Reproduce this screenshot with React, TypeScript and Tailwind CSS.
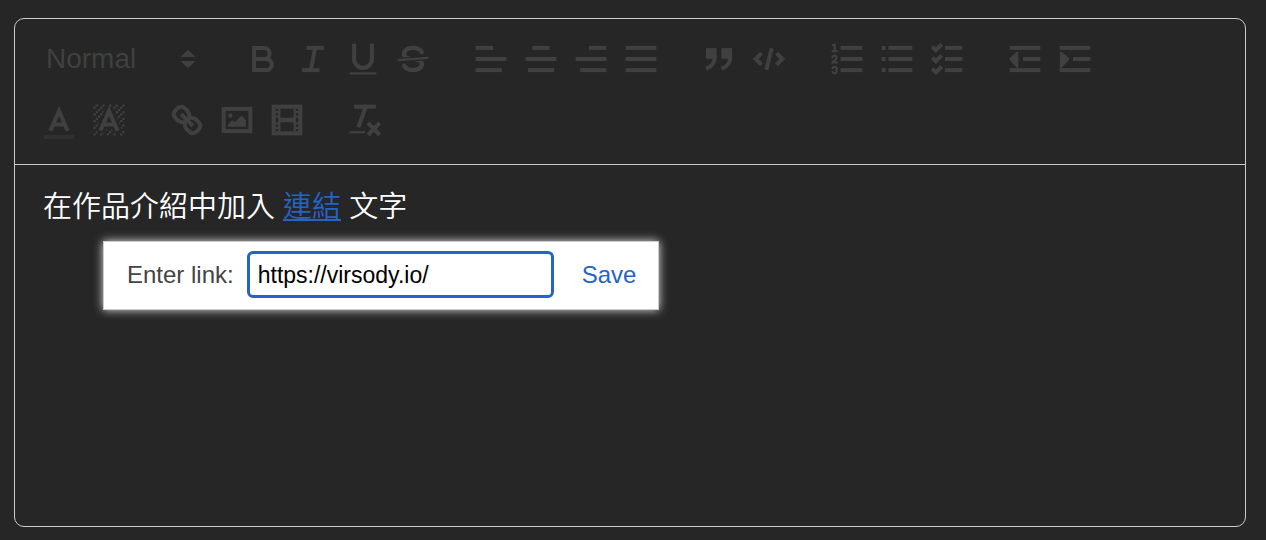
import React, { useState } from "react";

const s = {
  fill: "none",
  stroke: "currentColor",
  strokeWidth: 1.8,
  strokeLinecap: "square",
  strokeLinejoin: "miter",
} as const;
const thin = { ...s, strokeWidth: 1, strokeLinecap: "round" } as const;
const both = { ...s, fill: "currentColor" } as const;
const f = { fill: "currentColor" } as const;

function Icon({ children }: { children: React.ReactNode }) {
  return (
    <svg viewBox="0 0 18 18" className="size-10 shrink-0" aria-hidden="true">
      {children}
    </svg>
  );
}

/** Horizontal strokes given as [x1, x2, y]. */
function Lines({ rows }: { rows: number[][] }) {
  return (
    <>
      {rows.map(([a, b, y]) => (
        <line key={`${a}-${y}`} {...s} x1={a} x2={b} y1={y} y2={y} />
      ))}
    </>
  );
}

const hatch = [
  [4, 4], [2, 6], [3, 5], [4, 7], [2, 12], [2, 9], [2, 15], [3, 8], [12, 2], [11, 3],
  [2, 3], [6, 2], [3, 2], [5, 3], [9, 2], [15, 14], [13, 7], [15, 5], [14, 6], [15, 8],
  [14, 9], [14, 3], [15, 2], [12, 5], [13, 4], [9, 14], [8, 15], [5, 15], [11, 15],
  [14, 15], [15, 11],
];

type Tool = { label: string; icon: React.ReactNode };

const groups: Tool[][] = [
  [
    {
      label: "Bold",
      icon: (
        <>
          <path {...s} d="M5,4H9.5A2.5,2.5,0,0,1,12,6.5v0A2.5,2.5,0,0,1,9.5,9H5V4Z" />
          <path {...s} d="M5,9h5.5A2.5,2.5,0,0,1,13,11.5v0A2.5,2.5,0,0,1,10.5,14H5V9Z" />
        </>
      ),
    },
    {
      label: "Italic",
      icon: (
        <>
          <Lines rows={[[7, 13, 4], [5, 11, 14]]} />
          <line {...s} strokeLinecap="butt" x1="8" x2="10" y1="14" y2="4" />
        </>
      ),
    },
    {
      label: "Underline",
      icon: (
        <>
          <path {...s} d="M5,3V9a4.012,4.012,0,0,0,4,4H9a4.012,4.012,0,0,0,4-4V3" />
          <rect {...f} height="1" width="12" x="3" y="15" />
        </>
      ),
    },
    {
      label: "Strike",
      icon: (
        <>
          <line {...thin} x1="15.5" x2="2.5" y1="8.5" y2="9.5" />
          <path {...f} d="M9.007,8C6.542,7.791,6,7.519,6,6.5,6,5.792,7.283,5,9,5c1.571,0,2.765.679,2.969,1.309a1,1,0,0,0,1.9-.617C13.356,4.106,11.354,3,9,3,6.2,3,4,4.538,4,6.5a3.2,3.2,0,0,0,.5,1.843Z" />
          <path {...f} d="M8.984,10C11.457,10.208,12,10.479,12,11.5c0,.708-1.283,1.5-3,1.5-1.571,0-2.765-.679-2.969-1.309a1,1,0,1,0-1.9.617C4.644,13.894,6.646,15,9,15c2.8,0,5-1.538,5-3.5a3.2,3.2,0,0,0-.5-1.843Z" />
        </>
      ),
    },
  ],
  [
    { label: "Align left", icon: <Lines rows={[[3, 9, 4], [3, 15, 9], [3, 13, 14]]} /> },
    { label: "Align center", icon: <Lines rows={[[6, 12, 4], [3, 15, 9], [4, 14, 14]]} /> },
    { label: "Align right", icon: <Lines rows={[[9, 15, 4], [3, 15, 9], [5, 15, 14]]} /> },
    { label: "Justify", icon: <Lines rows={[[3, 15, 4], [3, 15, 9], [3, 15, 14]]} /> },
  ],
  [
    {
      label: "Quote",
      icon: (
        <>
          <rect {...both} height="3" width="3" x="4" y="5" />
          <rect {...both} height="3" width="3" x="11" y="5" />
          <path {...s} d="M7,8c0,4.031-3,5-3,5" />
          <path {...s} d="M14,8c0,4.031-3,5-3,5" />
        </>
      ),
    },
    {
      label: "Code",
      icon: (
        <>
          <polyline {...s} points="5 7 3 9 5 11" />
          <polyline {...s} points="13 7 15 9 13 11" />
          <line {...s} x1="10" x2="8" y1="5" y2="13" />
        </>
      ),
    },
  ],
  [
    {
      label: "Numbered list",
      icon: (
        <>
          <Lines rows={[[7, 15, 4], [7, 15, 9], [7, 15, 14]]} />
          <line {...thin} x1="2.5" x2="4.5" y1="5.5" y2="5.5" />
          <path {...f} d="M3.5,6A0.5,0.5,0,0,1,3,5.5V3.085l-0.276.138A0.5,0.5,0,0,1,2.053,3c-0.124-.247-0.023-0.324.224-0.447l1-.5A0.5,0.5,0,0,1,4,2.5v3A0.5,0.5,0,0,1,3.5,6Z" />
          <path {...thin} d="M4.5,10.5h-2c0-.234,1.85-1.076,1.85-2.234A0.959,0.959,0,0,0,2.5,8.156" />
          <path {...thin} d="M2.5,14.846a0.959,0.959,0,0,0,1.85-.109A0.7,0.7,0,0,0,3.75,14a0.688,0.688,0,0,0,.6-0.736,0.959,0.959,0,0,0-1.85-.109" />
        </>
      ),
    },
    {
      label: "Bulleted list",
      icon: (
        <>
          <Lines rows={[[6, 15, 4], [6, 15, 9], [6, 15, 14]]} />
          <path {...f} d="M2.1,3.1h1.8v1.8H2.1ZM2.1,8.1h1.8v1.8H2.1ZM2.1,13.1h1.8v1.8H2.1Z" />
        </>
      ),
    },
    {
      label: "Checklist",
      icon: (
        <>
          <Lines rows={[[9, 15, 4], [9, 15, 9], [9, 15, 14]]} />
          <polyline {...s} points="3 4 4 5 6 3" />
          <polyline {...s} points="3 9 4 10 6 8" />
          <polyline {...s} points="3 14 4 15 6 13" />
        </>
      ),
    },
  ],
  [
    {
      label: "Outdent",
      icon: (
        <>
          <Lines rows={[[3, 15, 4], [9, 15, 9], [3, 15, 14]]} />
          <polygon {...f} points="6 5.8 6 13 5.4 13 2.1 9.5 2.1 8.6 5.2 5.8" />
        </>
      ),
    },
    {
      label: "Indent",
      icon: (
        <>
          <Lines rows={[[3, 15, 4], [9, 15, 9], [3, 15, 14]]} />
          <polygon {...f} points="2.2 5.8 3.2 5.8 6.3 8.6 6.3 9.4 2.8 13 2.2 13" />
        </>
      ),
    },
  ],
  [
    {
      label: "Text color",
      icon: (
        <>
          <line {...s} opacity="0.4" x1="3" x2="15" y1="16.6" y2="16.6" />
          <polyline {...s} points="5.5 13 9 5 12.5 13" />
          <line {...s} strokeLinecap="butt" x1="11.63" x2="6.38" y1="11" y2="11" />
        </>
      ),
    },
    {
      label: "Background color",
      icon: (
        <>
          <g {...f}>
            {hatch.map(([x, y]) => (
              <rect key={`${x}-${y}`} x={x} y={y} width="1" height="1" />
            ))}
            <path d="M6,6.868V6H5V7H5.942ZM6.817,5H6V6H6.38ZM4,11.439V11H3v1h.755ZM4.63,10H4v1h.192Z" />
            <path d="M10.832,4.2L11,4.582V4H10.708ZM7,4.582L7.168,4.2,7.292,4H7ZM8,13H7.683l-.351.8-.124.2H8ZM9,3H8V3.282Z" />
            <path d="M13.447,10.174L13.808,11H14V10H13.37ZM3.775,14H3v1H4V14.314ZM12,6.868V6h-.38ZM12.933,9H13V8h-.505Z" />
            <path d="M6,14.926V15H7V14.316ZM10.668,13.8L10.317,13H10v1h.792ZM14.332,12.2l.166.8H15V12h-.755Z" />
          </g>
          <polyline {...s} points="5.5 13 9 5 12.5 13" />
          <line {...s} strokeLinecap="butt" x1="11.63" x2="6.38" y1="11" y2="11" />
        </>
      ),
    },
  ],
  [
    {
      label: "Link",
      icon: (
        <>
          <line {...s} x1="7" x2="11" y1="7" y2="11" />
          <path {...s} d="M8.9,4.577a3.476,3.476,0,0,1,.36,4.679A3.476,3.476,0,0,1,4.577,8.9C3.185,7.5,2.035,6.4,4.217,4.217S7.5,3.185,8.9,4.577Z" />
          <path {...s} d="M13.423,9.1a3.476,3.476,0,0,0-4.679-.36,3.476,3.476,0,0,0,.36,4.679c1.392,1.392,2.5,2.542,4.679.36S14.815,10.5,13.423,9.1Z" />
        </>
      ),
    },
    {
      label: "Image",
      icon: (
        <>
          <rect {...s} height="10" width="12" x="3" y="4" />
          <circle {...f} cx="6" cy="7" r="1" />
          <polygon {...f} points="5 12 5 11 7 9 8 10 11 7 13 9 13 12" />
        </>
      ),
    },
    {
      label: "Video",
      icon: (
        <>
          <rect {...s} height="12" width="12" x="3" y="3" />
          <path {...f} d="M5,3h1v12H5ZM12,3h1v12h-1ZM5,8h8v2H5Z" />
          <path {...f} d="M3,5h3v1H3ZM3,7h3v1H3ZM3,10h3v1H3ZM3,12h3v1H3Z" />
          <path {...f} d="M12,5h3v1h-3ZM12,7h3v1h-3ZM12,10h3v1h-3ZM12,12h3v1h-3Z" />
        </>
      ),
    },
  ],
  [
    {
      label: "Clear formatting",
      icon: (
        <>
          <Lines rows={[[5, 13, 3]]} />
          <line {...s} x1="6.3" x2="9.35" y1="11.5" y2="3" />
          <line {...s} x1="11" x2="15" y1="11" y2="15" />
          <line {...s} x1="15" x2="11" y1="11" y2="15" />
          <rect {...f} height="1" width="7" x="2" y="14" />
        </>
      ),
    },
  ],
];

function Toolbar() {
  return (
    <div
      role="toolbar"
      aria-label="Formatting"
      className="flex flex-wrap gap-x-7 gap-y-[11px] border-b border-[#ccc] px-[19px] pt-[15px] pb-[19px] text-[#404040]"
    >
      <button
        type="button"
        aria-haspopup="listbox"
        className="flex h-[50px] w-44 items-center justify-between pr-0.5 pl-3 text-[28px] font-medium"
      >
        Normal
        <Icon>
          <polygon {...f} points="5.7 8.1 9 4.8 12.3 8.1" />
          <polygon {...f} points="5.7 9.9 9 13.2 12.3 9.9" />
        </Icon>
      </button>
      {groups.map((tools) => (
        <div key={tools[0].label} className="flex">
          {tools.map((tool) => (
            <button
              key={tool.label}
              type="button"
              aria-label={tool.label}
              className="flex h-[50px] w-[50px] items-center justify-center"
            >
              <Icon>{tool.icon}</Icon>
            </button>
          ))}
        </div>
      ))}
    </div>
  );
}

function LinkTooltip() {
  const [url, setUrl] = useState("https://virsody.io/");
  return (
    <form
      onSubmit={(e) => e.preventDefault()}
      className="absolute top-[76px] left-[88px] flex items-center border border-[#ccc] bg-white pt-[9px] pr-[22px] pb-[11px] pl-[23px] text-[24px] text-[#444] shadow-[0_0_9px_#ddd]"
    >
      <label htmlFor="link-url">Enter link:</label>
      <input
        id="link-url"
        type="text"
        value={url}
        onChange={(e) => setUrl(e.target.value)}
        className="ml-[13px] h-[47px] w-[307px] rounded-[6px] border-[3px] border-[#2463c8] bg-white px-2 pt-0.5 text-[23px] text-black outline-none"
      />
      <button type="submit" className="ml-7 text-[#2463c8]">
        Save
      </button>
    </form>
  );
}

export default function App() {
  return (
    <main className="flex min-h-screen flex-col bg-[#262626] pt-[18px] pr-5 pb-[13px] pl-[14px] font-['Liberation_Sans','Noto_Sans_CJK_TC',sans-serif]">
      <section className="flex grow flex-col rounded-[10px] border border-[#ccc]">
        <Toolbar />
        <div className="relative grow px-7 pt-[21px]">
          <p lang="zh-Hant" className="text-[29px] leading-[42px] font-[350] text-white">
            在作品介紹中加入{" "}
            <a href="https://virsody.io/" className="text-[#2463c8] underline">
              連結
            </a>{" "}
            文字
          </p>
          <LinkTooltip />
        </div>
      </section>
    </main>
  );
}
